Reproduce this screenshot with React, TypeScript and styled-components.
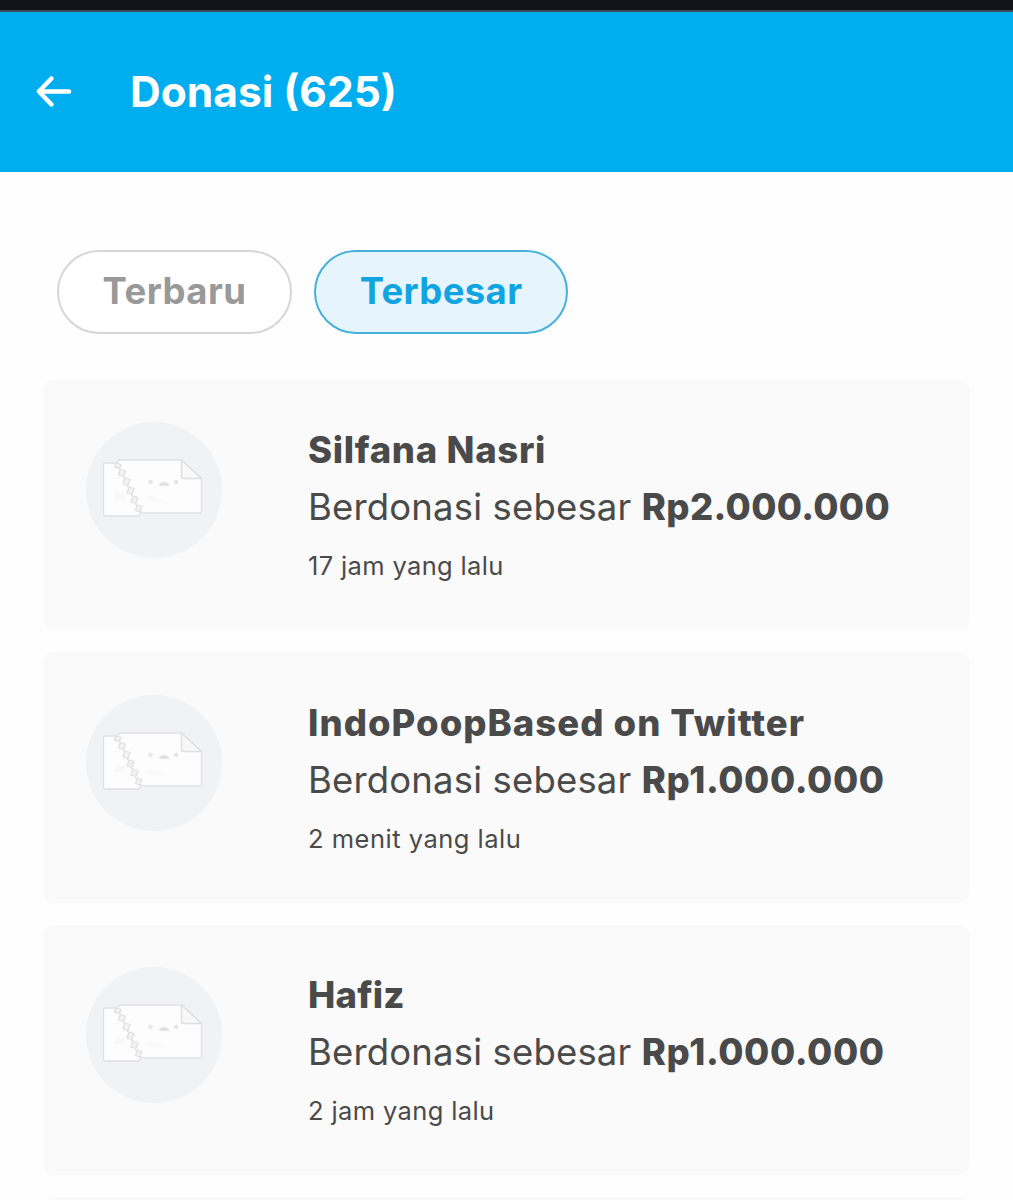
import React from "react";
import styled, { createGlobalStyle } from "styled-components";

const GlobalStyle = createGlobalStyle`
  *, *::before, *::after { box-sizing: border-box; }
  html, body { margin: 0; background: #fff; }
  body { font-family: Inter, "Liberation Sans", sans-serif; color: #4a4a4a; }
`;

const Screen = styled.div`
  width: 100%;
  height: 1200px;
  overflow: hidden;
  display: flex;
  flex-direction: column;
  background: #fefefe;
`;

const StatusBar = styled.div`
  flex: none;
  height: 12px;
  background: #13141b;
  border-bottom: 2px solid #3c4c5a;
`;

const Header = styled.header`
  flex: none;
  height: 159.5px;
  display: flex;
  align-items: center;
  gap: 57px;
  padding: 0 35px;
  background: #00aeef;
  color: #fff;
`;

const BackButton = styled.button`
  display: flex;
  padding: 0;
  border: 0;
  background: none;
  color: inherit;
`;

const Title = styled.h1<{ $tracking: number }>`
  margin: 0;
  font-size: 42.5px;
  line-height: 52px;
  font-weight: 700;
  letter-spacing: ${(p) => p.$tracking}px;
  white-space: nowrap;
`;

const Tabs = styled.nav`
  flex: none;
  display: flex;
  gap: 22px;
  padding: 78.5px 57px 46px;
`;

const Tab = styled.button<{ $active?: boolean; $width: number; $tracking: number }>`
  width: ${(p) => p.$width}px;
  height: 83.5px;
  padding: 0 0 2px;
  border: 2.5px solid ${(p) => (p.$active ? "#45b1db" : "#d6d6d6")};
  border-radius: 42px;
  background: ${(p) => (p.$active ? "#e6f5fd" : "#fff")};
  color: ${(p) => (p.$active ? "#11a4e0" : "#999")};
  font: 700 36.5px/44px Inter, "Liberation Sans", sans-serif;
  letter-spacing: ${(p) => p.$tracking}px;
`;

const List = styled.main`
  flex: none;
  display: flex;
  flex-direction: column;
  gap: 22px;
  padding: 0 43px;
`;

const Card = styled.article`
  height: 250.5px;
  display: flex;
  gap: 86px;
  padding: 42.5px 43px;
  border-radius: 11px;
  background: #fafafa;
`;

const Avatar = styled.div`
  flex: none;
  width: 136px;
  height: 136px;
  border-radius: 50%;
  background: #f1f2f4;
`;

const Details = styled.div`
  display: flex;
  flex-direction: column;
  white-space: nowrap;
`;

const Name = styled.h2<{ $tracking: number }>`
  margin: 0;
  font-size: 36.5px;
  line-height: 57px;
  font-weight: 800;
  letter-spacing: ${(p) => p.$tracking}px;
`;

const Donation = styled.p`
  margin: 0;
  font-size: 36.5px;
  line-height: 57px;
  letter-spacing: 0.16px;
`;

const Amount = styled.strong<{ $tracking: number }>`
  font-weight: 800;
  letter-spacing: ${(p) => p.$tracking}px;
`;

const Time = styled.time<{ $tracking: number }>`
  margin-top: 10px;
  font-size: 25.5px;
  line-height: 40px;
  letter-spacing: ${(p) => p.$tracking}px;
`;

const ArrowLeft = () => (
  <svg width="38" height="36" viewBox="0 0 38 36" fill="none" stroke="currentColor" strokeWidth="4.500" strokeLinecap="round" strokeLinejoin="round">
    <path d="M34 17.500H4M16.500 4.500 3.800 17.500 16.500 30.500" />
  </svg>
);

const TornNote = () => (
  <svg width="136" height="136" viewBox="0 0 136 136" fill="none" strokeLinejoin="round">
    <path d="M17.500 43q0-2 2-2H30l-1.500 4 6 1.500-2 6.500 6.500 2-2 7 6.500 2-2.500 7 6.500 2-2.500 7 6.500 2-2 6.500 5.500 2-2.500 3.500H19.500q-2 0-2-2Z" fill="#fdfdfd" stroke="#e1e1e2" strokeWidth="1.300" />
    <path d="M33.500 38h62l20 18.500V89q0 2-2 2H59l-5-1.500 2-5-6.500-2 2.500-7-6.500-2 2.500-7-6.500-2 2.500-7-6.500-2 2-6.500-6-2 1.500-4.500-4.500-1.500Z" fill="#fdfdfd" stroke="#e1e1e2" strokeWidth="1.300" />
    <path d="M95.500 38v16q0 2.500 2.500 2.500h17.500Z" fill="#f8f8f9" stroke="#dedfe0" strokeWidth="1.500" />
    <path d="M28 55h6v2h-6zM28 71h11v6H28zM61 73l22 7H61z" fill="#f9f9fa" />
    <circle cx="64.500" cy="60" r="2.300" fill="#e6e6e7" />
    <circle cx="90" cy="60" r="2.300" fill="#e6e6e7" />
    <path d="M73 63.500q0-3 2.800-2.800 2.200-2 4.400 0 3 0 3 2.800-5 1-10.200 0Z" fill="#e2e2e2" />
  </svg>
);

const donors = [
  { name: "Silfana Nasri", nameTracking: 0.68, amount: "Rp2.000.000", amountTracking: 0.33, time: "17 jam yang lalu", timeTracking: 0.35 },
  { name: "IndoPoopBased on Twitter", nameTracking: 1.02, amount: "Rp1.000.000", amountTracking: 0.6, time: "2 menit yang lalu", timeTracking: 0.5 },
  { name: "Hafiz", nameTracking: 0.2, amount: "Rp1.000.000", amountTracking: 0.6, time: "2 jam yang lalu", timeTracking: 0.37 },
];

export default function App() {
  return (
    <Screen>
      <GlobalStyle />
      <StatusBar />
      <Header>
        <BackButton aria-label="Kembali"><ArrowLeft /></BackButton>
        <Title $tracking={0}>Donasi (625)</Title>
      </Header>
      <Tabs>
        <Tab $width={235} $tracking={0.45}>Terbaru</Tab>
        <Tab $active $width={254} $tracking={0.35}>Terbesar</Tab>
      </Tabs>
      <List>
        {donors.map((d) => (
          <Card key={d.name}>
            <Avatar><TornNote /></Avatar>
            <Details>
              <Name $tracking={d.nameTracking}>{d.name}</Name>
              <Donation>
                Berdonasi sebesar <Amount $tracking={d.amountTracking}>{d.amount}</Amount>
              </Donation>
              <Time $tracking={d.timeTracking}>{d.time}</Time>
            </Details>
          </Card>
        ))}
        <Card />
      </List>
    </Screen>
  );
}
